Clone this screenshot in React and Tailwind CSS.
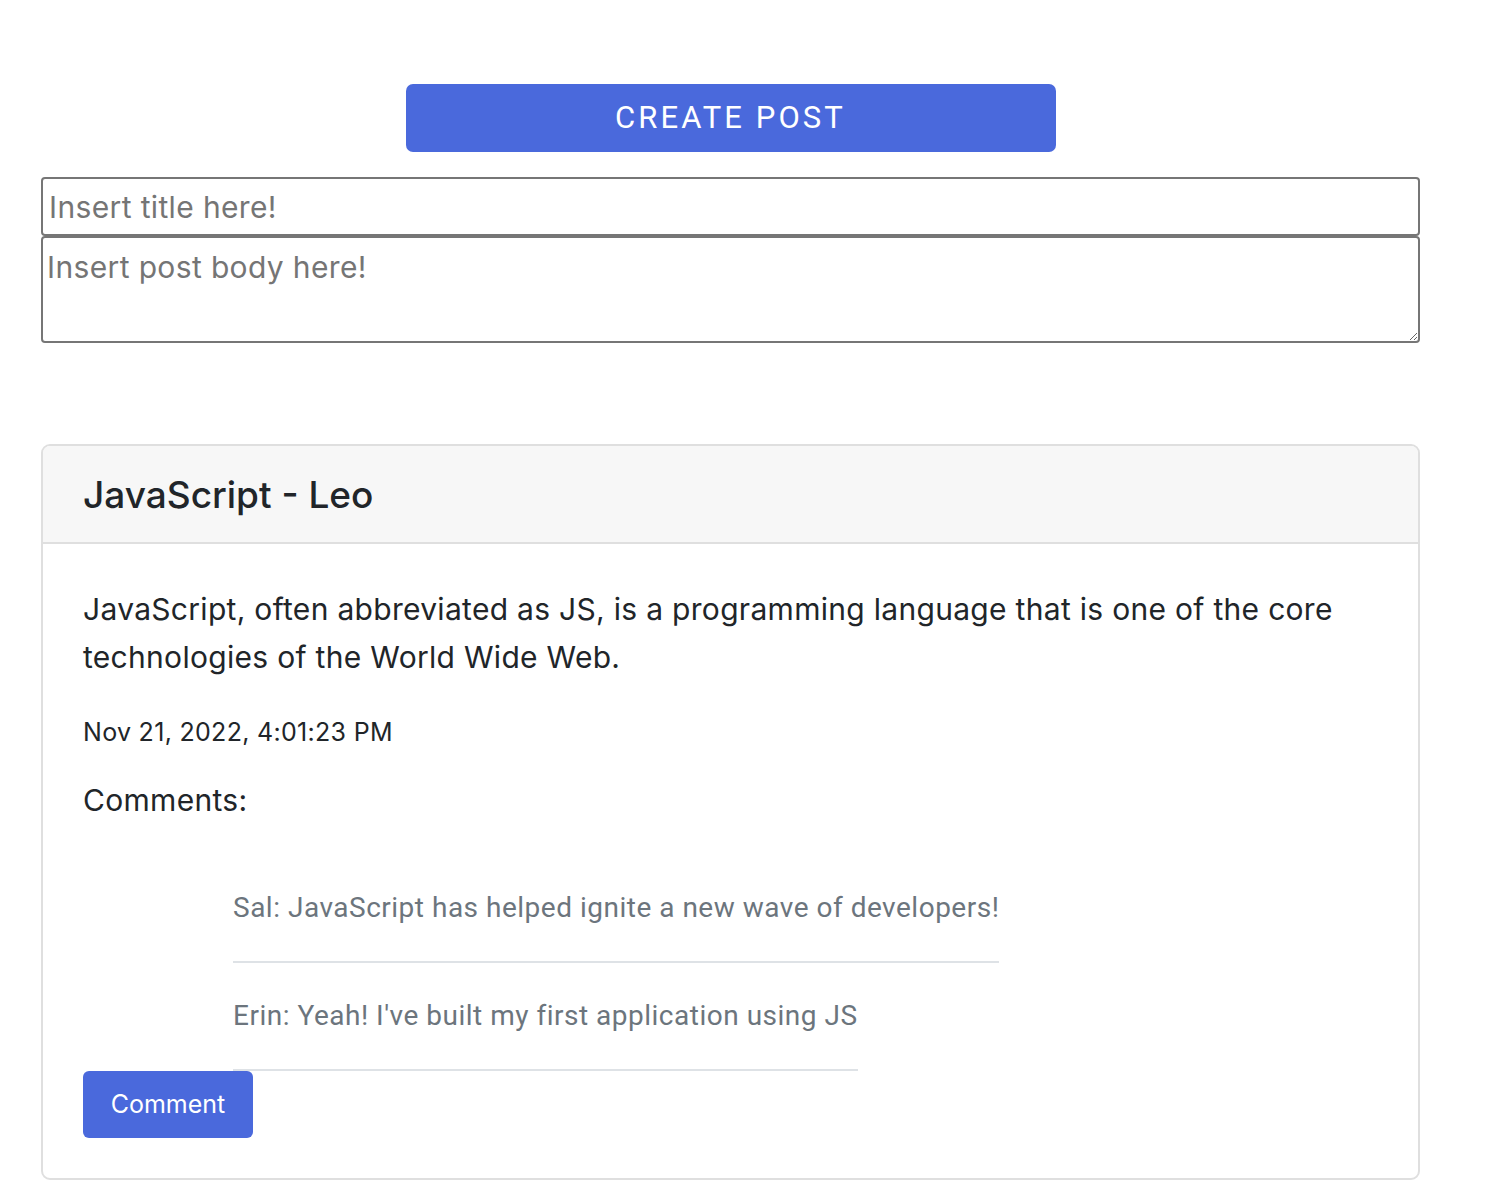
import React, { useState } from "react";

const comments = [
  { id: 1, author: "Sal", text: "JavaScript has helped ignite a new wave of developers!" },
  { id: 2, author: "Erin", text: "Yeah! I've built my first application using JS" },
];

const App = () => {
  const [title, setTitle] = useState("");
  const [body, setBody] = useState("");

  return (
    <div className="min-h-screen bg-white font-['Inter',sans-serif] text-[#212529]">
      <div className="ml-[41px] mr-[68px] pt-[84px] pb-[24px]">
        <div className="flex justify-center">
          <button className="w-[650px] h-[68px] rounded-[7px] bg-[#4a69dc] text-white text-[31px] tracking-[0.1em] font-['Roboto',sans-serif] uppercase">
            Create Post
          </button>
        </div>

        <div className="mt-[25px] flex flex-col">
          <input
            value={title}
            onChange={(e) => setTitle(e.target.value)}
            placeholder="Insert title here!"
            className="h-[59px] w-full rounded-[4px] border-2 border-[#767676] px-[6px] text-[30px] tracking-[0.012em] placeholder:text-[#757575] outline-none"
          />
          <textarea
            value={body}
            onChange={(e) => setBody(e.target.value)}
            placeholder="Insert post body here!"
            className="h-[107px] w-full rounded-[4px] border-2 border-[#767676] px-[4px] pt-[5px] text-[30px] leading-[48px] tracking-[0.012em] placeholder:text-[#757575] outline-none"
          />
        </div>

        {/* Post card */}
        <div className="mt-[101px] rounded-[9px] border-2 border-[#dfdfdf] overflow-hidden">
          <div className="h-[98px] bg-[#f7f7f7] border-b-2 border-[#dfdfdf] px-[40px] flex items-center">
            <h2 className="text-[37px] font-medium leading-none">JavaScript - Leo</h2>
          </div>
          <div className="px-[40px] pt-[41px] pb-[40px]">
            <p className="text-[30px] leading-[48px] tracking-[0.01em] pr-[40px]">
              JavaScript, often abbreviated as JS, is a programming language that is one of the core technologies of the World Wide Web.
            </p>
            <p className="mt-[33px] text-[25px] leading-[36px] tracking-[0.012em]">Nov 21, 2022, 4:01:23 PM</p>
            <p className="mt-[26px] text-[30px] leading-[48px] tracking-[0.01em]">Comments:</p>
            <ul className="mt-[31px] ml-[150px] flex flex-col items-start">
              {comments.map((c) => (
                <li
                  key={c.id}
                  className="py-[33px] border-b-2 border-[#dee2e6] text-[28px] leading-[40px] tracking-[0.018em] text-[#6c757d] font-['Roboto',sans-serif]"
                >
                  {c.author}: {c.text}
                </li>
              ))}
            </ul>
            <button className="w-[170px] h-[67px] rounded-[6px] bg-[#4a69dc] text-white text-[25px]">
              Comment
            </button>
          </div>
        </div>
      </div>
    </div>
  );
};

export default App;
